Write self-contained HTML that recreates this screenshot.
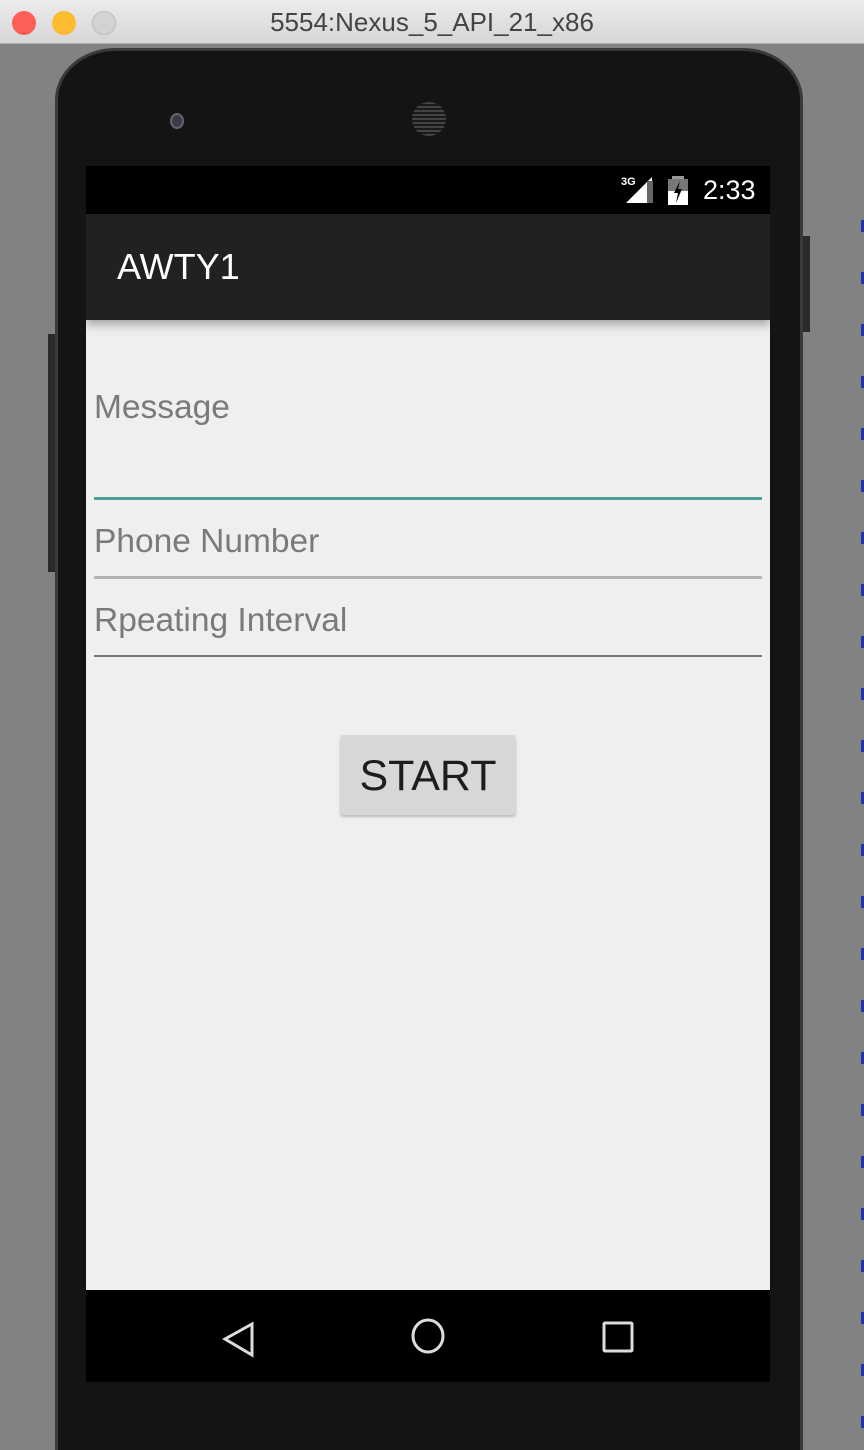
<!DOCTYPE html>
<html style="height:1450px;overflow:hidden"><head><meta charset="utf-8"><style>
*{margin:0;padding:0;box-sizing:border-box}
body{width:864px;height:1450px;background:#828282;position:relative;overflow:hidden;font-family:"Liberation Sans",sans-serif}
.titlebar{position:absolute;left:0;top:0;width:864px;height:44px;background:linear-gradient(#ececec,#d6d6d6);border-bottom:1px solid #b0b0b0;text-align:center;font-size:26px;line-height:44px;color:#444}
.dot{position:absolute;top:11px;width:24px;height:24px;border-radius:50%}
.strip{position:absolute;right:0;top:180px;width:3px;height:1270px;background:repeating-linear-gradient(#828282 0 40px,#2233aa 40px 52px)}
.phone{position:absolute;left:55px;top:48px;width:748px;height:1402px;background:#141414;border-radius:60px 60px 0 0/52px 52px 0 0;border:3px solid #3a3a3a;border-bottom:none}
.btn{position:absolute;background:#2a2a2a}
.screen{position:absolute;left:86px;top:166px;width:684px;height:1216px;background:#efefef;overflow:hidden}
.status{position:absolute;left:0;top:0;width:684px;height:48px;background:#000;color:#fff}
.appbar{position:absolute;left:0;top:48px;width:684px;height:106px;background:#212121;box-shadow:0 4px 10px rgba(0,0,0,.35);color:#fff;font-size:36px;line-height:106px;padding-left:31px}
.lbl{position:absolute;left:8px;color:#7a7a7a;font-size:33.5px}
.line{position:absolute;left:8px;width:668px}
.start{position:absolute;left:254px;top:569px;width:176px;height:80px;background:#d6d7d7;border-radius:3px;box-shadow:0 2px 2px rgba(0,0,0,.2);text-align:center;font-size:43px;line-height:82px;color:#1d1d1d}
.nav{position:absolute;left:0;top:1124px;width:684px;height:92px;background:#000}
</style></head><body>
<div class="titlebar">5554:Nexus_5_API_21_x86
<div class="dot" style="left:12px;background:#fc5f57"></div>
<div class="dot" style="left:52px;background:#fdbc2e"></div>
<div class="dot" style="left:92px;background:#d3d3d3;border:1px solid #bbb"></div>
</div>
<div class="strip"></div>
<div class="btn" style="left:48px;top:334px;width:8px;height:238px"></div>
<div class="btn" style="left:803px;top:236px;width:7px;height:96px"></div>
<div class="phone"></div>
<div style="position:absolute;left:170px;top:113px;width:14px;height:16px;border-radius:50%;background:#3a3a4a;border:2px solid #666"></div>
<div style="position:absolute;left:412px;top:102px;width:34px;height:34px;border-radius:50%;background:repeating-linear-gradient(0deg,#444 0 2px,#1a1a1a 2px 4px)"></div>
<div class="screen">
 <div class="status">
  <span style="position:absolute;left:535px;top:10px;font-size:11px;font-weight:bold">3G</span>
  <svg style="position:absolute;left:540px;top:11px" width="28" height="27"><polygon points="26,0 26,26 0,26" fill="#fff"/><rect x="21" y="4" width="6" height="22" fill="#666"/></svg>
  <svg style="position:absolute;left:582px;top:10px" width="22" height="29"><rect x="4" y="0" width="12" height="3" fill="#999"/><rect x="0" y="3" width="20" height="26" fill="#fff"/><rect x="0" y="3" width="20" height="12" fill="#777"/><polygon points="12,5 6,17 10,17 8,27 14,13 10,13" fill="#000"/></svg>
  <span style="position:absolute;left:617px;top:9px;font-size:27px">2:33</span>
 </div>
 <div class="appbar">AWTY1</div>
 <div class="lbl" style="top:223px">Message</div>
 <div class="line" style="top:331px;height:3px;background:#4a9f96"></div>
 <div class="lbl" style="top:357px">Phone Number</div>
 <div class="line" style="top:410px;height:3px;background:#b3b3b3"></div>
 <div class="lbl" style="top:436px">Rpeating Interval</div>
 <div class="line" style="top:489px;height:2px;background:#777"></div>
 <div class="start">START</div>
 <div class="nav">
  <svg width="684" height="92"><g fill="none" stroke="#ddd" stroke-width="3"><polygon points="166,34 166,65 139,49"/><ellipse cx="342" cy="46" rx="15" ry="16"/><rect x="518" y="33" width="28" height="28" rx="1"/></g></svg>
 </div>
</div>
</body></html>
